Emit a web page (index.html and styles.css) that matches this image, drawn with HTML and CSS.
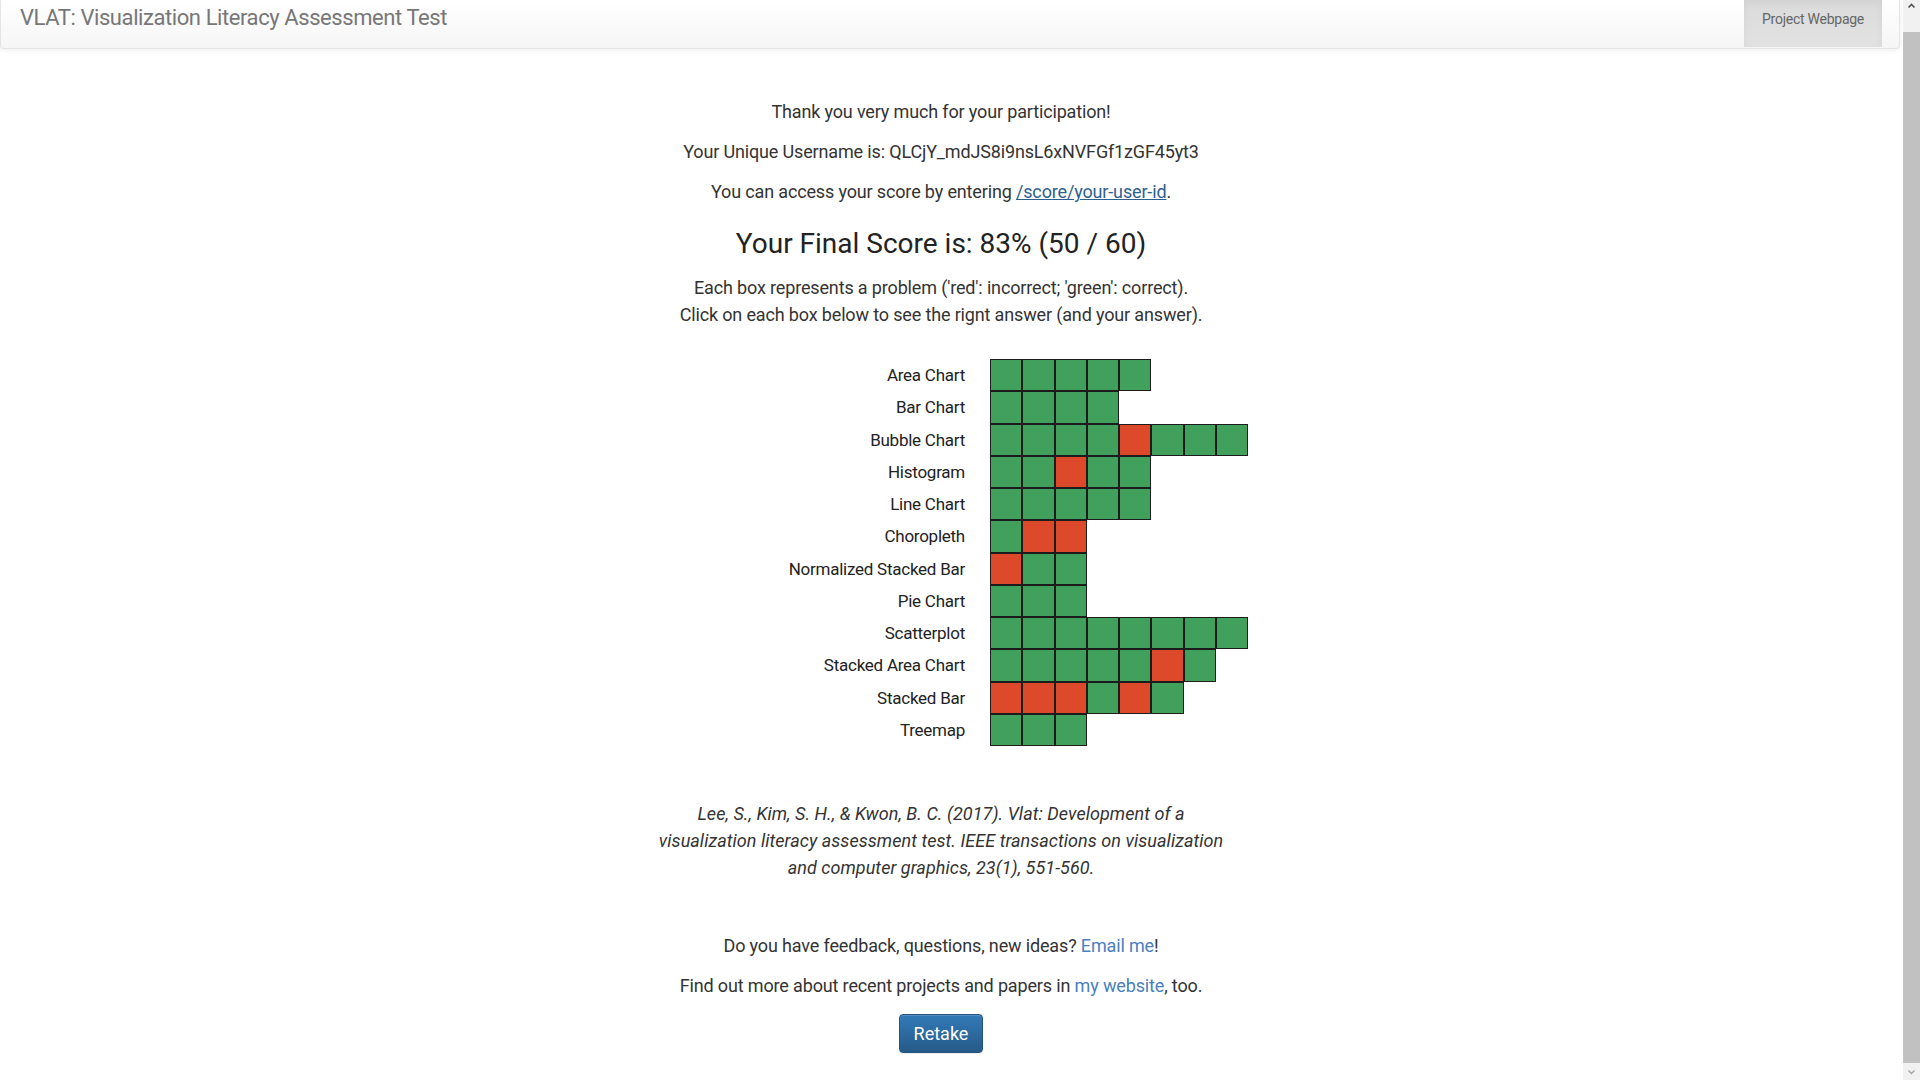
FILE: index.html
```html
<!DOCTYPE html>
<html lang="en">
<head>
<meta charset="utf-8">
<title>VLAT: Visualization Literacy Assessment Test</title>
<link rel="stylesheet" href="styles.css">
</head>
<body>
<nav class="navbar">
  <span class="brand">VLAT: Visualization Literacy Assessment Test</span>
  <ul class="nav-right">
    <li class="active"><a href="#">Project Webpage</a></li>
  </ul>
</nav>

<main class="content">
  <p>Thank you very much for your participation!</p>
  <p>Your Unique Username is: QLCjY_mdJS8i9nsL6xNVFGf1zGF45yt3</p>
  <p>You can access your score by entering <a class="score-link" href="#">/score/your-user-id</a>.</p>
  <h2 class="score">Your Final Score is: 83% (50 / 60)</h2>
  <p class="legend">Each box represents a problem ('red': incorrect; 'green': correct).<br>Click on each box below to see the rignt answer (and your answer).</p>

  <div class="results">
    <div class="label">Area Chart</div>
    <div class="boxes"><span class="box g"></span><span class="box g"></span><span class="box g"></span><span class="box g"></span><span class="box g"></span></div>

    <div class="label">Bar Chart</div>
    <div class="boxes"><span class="box g"></span><span class="box g"></span><span class="box g"></span><span class="box g"></span></div>

    <div class="label">Bubble Chart</div>
    <div class="boxes"><span class="box g"></span><span class="box g"></span><span class="box g"></span><span class="box g"></span><span class="box r"></span><span class="box g"></span><span class="box g"></span><span class="box g"></span></div>

    <div class="label">Histogram</div>
    <div class="boxes"><span class="box g"></span><span class="box g"></span><span class="box r"></span><span class="box g"></span><span class="box g"></span></div>

    <div class="label">Line Chart</div>
    <div class="boxes"><span class="box g"></span><span class="box g"></span><span class="box g"></span><span class="box g"></span><span class="box g"></span></div>

    <div class="label">Choropleth</div>
    <div class="boxes"><span class="box g"></span><span class="box r"></span><span class="box r"></span></div>

    <div class="label">Normalized Stacked Bar</div>
    <div class="boxes"><span class="box r"></span><span class="box g"></span><span class="box g"></span></div>

    <div class="label">Pie Chart</div>
    <div class="boxes"><span class="box g"></span><span class="box g"></span><span class="box g"></span></div>

    <div class="label">Scatterplot</div>
    <div class="boxes"><span class="box g"></span><span class="box g"></span><span class="box g"></span><span class="box g"></span><span class="box g"></span><span class="box g"></span><span class="box g"></span><span class="box g"></span></div>

    <div class="label">Stacked Area Chart</div>
    <div class="boxes"><span class="box g"></span><span class="box g"></span><span class="box g"></span><span class="box g"></span><span class="box g"></span><span class="box r"></span><span class="box g"></span></div>

    <div class="label">Stacked Bar</div>
    <div class="boxes"><span class="box r"></span><span class="box r"></span><span class="box r"></span><span class="box g"></span><span class="box r"></span><span class="box g"></span></div>

    <div class="label">Treemap</div>
    <div class="boxes"><span class="box g"></span><span class="box g"></span><span class="box g"></span></div>
  </div>

  <p class="citation"><em>Lee, S., Kim, S. H., &amp; Kwon, B. C. (2017). Vlat: Development of a<br>visualization literacy assessment test. IEEE transactions on visualization<br>and computer graphics, 23(1), 551-560.</em></p>

  <p class="feedback">Do you have feedback, questions, new ideas? <a class="plain-link" href="#">Email me</a>!</p>
  <p>Find out more about recent projects and papers in <a class="plain-link" href="#">my website</a>, too.</p>
  <div class="actions"><button class="btn-primary" type="button">Retake</button></div>
</main>

<div class="scrollbar" aria-hidden="true">
  <div class="sb-arrow sb-up"><svg width="17" height="17" viewBox="0 0 17 17"><polyline points="5.5,7.5 8.5,4.5 11.5,7.5" fill="none" stroke="#505050" stroke-width="1.6"/></svg></div>
  <div class="sb-track"><div class="sb-thumb"></div></div>
  <div class="sb-arrow sb-down"><svg width="17" height="17" viewBox="0 0 17 17"><polyline points="5.5,7.5 8.5,10.5 11.5,7.5" fill="none" stroke="#a3a3a3" stroke-width="1.4"/></svg></div>
</div>
</body>
</html>
```

FILE: styles.css
```css
html, body {
  margin: 0;
  padding: 0;
  height: 1080px;
  overflow: hidden;
  background: #fff;
}

body {
  font-family: "Roboto", "Liberation Sans", sans-serif;
  color: #333;
  width: 1903px;
}

.navbar {
  display: flex;
  justify-content: space-between;
  align-items: flex-start;
  width: 1898px;
  height: 48px;
  border: 1px solid #e4e4e4;
  border-top: none;
  border-radius: 0 0 4px 4px;
  background-image: linear-gradient(to bottom, #ffffff 0%, #f6f6f6 100%);
  box-shadow: 0 1px 5px rgba(0, 0, 0, 0.075);
}

.brand {
  padding: 7px 0 0 19px;
  font-size: 22px;
  line-height: 22px;
  color: #777;
  letter-spacing: -0.42px;
}

.nav-right {
  list-style: none;
  margin: 0 17px 0 0;
  padding: 0;
  display: flex;
}

.nav-right .active a {
  display: block;
  box-sizing: border-box;
  width: 138px;
  height: 47px;
  padding-top: 9px;
  text-align: center;
  font-size: 14px;
  line-height: 20px;
  letter-spacing: -0.25px;
  color: #666;
  text-decoration: none;
  background-image: linear-gradient(to bottom, #dbdbdb 0%, #e2e2e2 100%);
  box-shadow: inset 0 3px 9px rgba(0, 0, 0, 0.05);
}

.content {
  width: 1882px;
  padding-top: 49px;
  text-align: center;
}

.content p {
  margin: 0 0 13px;
  font-size: 18px;
  line-height: 27px;
  letter-spacing: -0.15px;
}

.score-link {
  color: #2f5f8f;
  text-decoration: underline;
}

.plain-link {
  color: #4a80be;
  text-decoration: none;
}

.score {
  margin: 22px 0 14px;
  font-size: 28px;
  line-height: 33px;
  font-weight: 400;
  color: #222;
}

.results {
  display: grid;
  grid-template-columns: 339px 266px;
  column-gap: 25px;
  width: 630px;
  margin: 31px auto 0;
}

.label {
  text-align: right;
  font-size: 17px;
  letter-spacing: -0.25px;
  line-height: 32.25px;
  height: 32.25px;
  color: #222;
}

.boxes {
  display: flex;
  height: 32.25px;
}

.box {
  display: block;
  width: 30.25px;
  height: 30.25px;
  border: 1px solid #1c1c1c;
}

.box.g { background: #41a05b; }
.box.r { background: #dd4a2b; }

.content p.citation {
  margin-top: 54px;
  color: #333;
  letter-spacing: 0.05px;
}

.content p.feedback {
  margin-top: 51px;
}

.actions {
  margin-top: 15px;
}

.btn-primary {
  box-sizing: border-box;
  width: 84px;
  height: 39px;
  padding: 0;
  font-family: inherit;
  font-size: 18px;
  color: #fff;
  border: 1px solid #245580;
  border-radius: 4px;
  background-image: linear-gradient(to bottom, #337ab7 0%, #265a88 100%);
  box-shadow: inset 0 1px 0 rgba(255, 255, 255, 0.15), 0 1px 1px rgba(0, 0, 0, 0.075);
  cursor: pointer;
}

.scrollbar {
  position: fixed;
  top: 0;
  right: 0;
  width: 17px;
  height: 1080px;
  display: flex;
  flex-direction: column;
  background: #f1f1f1;
}

.sb-arrow {
  height: 17px;
  flex: none;
}

.sb-arrow svg {
  display: block;
}

.sb-track {
  flex: 1;
  padding-top: 15px;
  display: flex;
}

.sb-thumb {
  flex: 1;
  background: #c1c1c1;
}
```
